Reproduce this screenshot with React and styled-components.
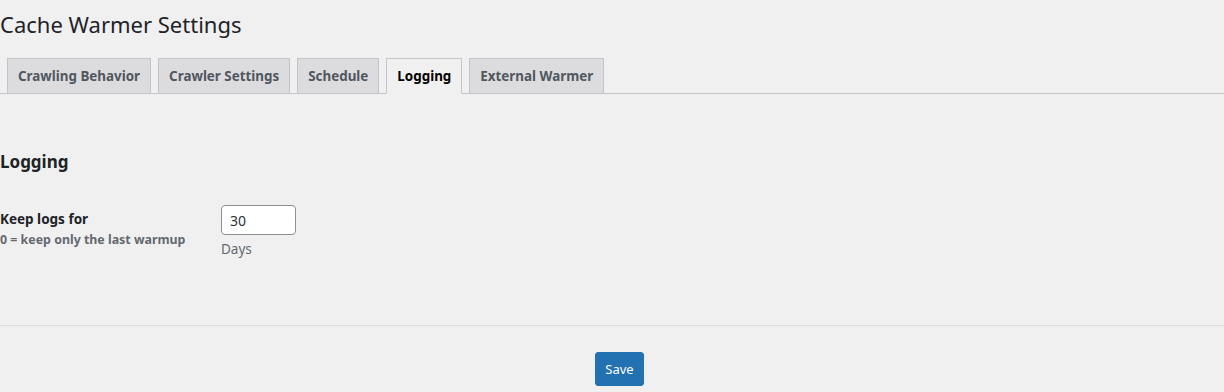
import React, { useState } from 'react';
import styled, { createGlobalStyle } from 'styled-components';

const GlobalStyle = createGlobalStyle`
  html, body {
    margin: 0;
    padding: 0;
    background: #f0f0f1;
  }
  body {
    font-family: "Noto Sans", "Open Sans", sans-serif;
    font-size: 14px;
    color: #3c434a;
  }
`;

const Wrap = styled.div`
  display: flex;
  flex-direction: column;
`;

const Title = styled.h1`
  margin: 0;
  padding: 9px 0 4px;
  font-size: 22px;
  font-weight: 400;
  line-height: 30px;
  color: #1d2327;
`;

const TabBar = styled.nav`
  display: flex;
  margin-top: 15px;
  border-bottom: 1px solid #c3c4c7;
`;

const Tab = styled.a`
  display: block;
  margin-left: 7px;
  margin-bottom: -1px;
  padding: 5px 10px;
  font-size: 13.4px;
  font-weight: 700;
  line-height: 24px;
  text-decoration: none;
  white-space: nowrap;
  border: 1px solid #c3c4c7;
  background: ${p => (p.$active ? '#f0f0f1' : '#dcdcde')};
  border-bottom-color: ${p => (p.$active ? '#f0f0f1' : '#c3c4c7')};
  color: ${p => (p.$active ? '#000' : '#50575e')};
  cursor: pointer;
`;

const Section = styled.section`
  padding-top: 56px;
`;

const SectionTitle = styled.h2`
  margin: 0;
  font-size: 17px;
  font-weight: 700;
  line-height: 24px;
  color: #1d2327;
`;

const FieldRow = styled.div`
  display: grid;
  grid-template-columns: 221px auto;
  margin-top: 16px;
`;

const LabelCell = styled.div`
  padding-top: 20px;
`;

const Label = styled.label`
  display: block;
  font-size: 13.5px;
  font-weight: 700;
  line-height: 18px;
  color: #1d2327;
`;

const Hint = styled.div`
  margin-top: 4px;
  font-size: 12.4px;
  font-weight: 700;
  line-height: 16px;
  color: #646970;
`;

const InputCell = styled.div`
  padding-top: 15px;
  display: flex;
  flex-direction: column;
  align-items: flex-start;
`;

const NumberInput = styled.input`
  box-sizing: border-box;
  width: 75px;
  height: 30px;
  padding: 0 8px;
  font-family: inherit;
  font-size: 14px;
  color: #2c3338;
  background: #fff;
  border: 1px solid #8c8f94;
  border-radius: 4px;
  outline: none;
`;

const Unit = styled.p`
  margin: 5px 0 0;
  font-size: 13.5px;
  line-height: 18px;
  color: #646970;
`;

const Footer = styled.div`
  margin-top: 67px;
  border-top: 1px solid #dcdcde;
  display: flex;
  justify-content: center;
  padding: 26px 0 0 15px;
`;

const SaveButton = styled.button`
  box-sizing: border-box;
  height: 34px;
  padding: 0 9px;
  font-family: inherit;
  font-size: 13px;
  color: #fff;
  background: #2271b1;
  border: 1px solid #2271b1;
  border-radius: 3px;
  cursor: pointer;
`;

const tabs = ['Crawling Behavior', 'Crawler Settings', 'Schedule', 'Logging', 'External Warmer'];

export default function App() {
  const [active, setActive] = useState('Logging');
  const [days, setDays] = useState('30');

  return (
    <Wrap>
      <GlobalStyle />
      <Title>Cache Warmer Settings</Title>
      <TabBar>
        {tabs.map(t => (
          <Tab key={t} $active={t === active} onClick={() => setActive(t)}>
            {t}
          </Tab>
        ))}
      </TabBar>

      <Section>
        <SectionTitle>Logging</SectionTitle>
        <FieldRow>
          <LabelCell>
            <Label htmlFor="keep-logs">Keep logs for</Label>
            <Hint>0 = keep only the last warmup</Hint>
          </LabelCell>
          <InputCell>
            <NumberInput
              id="keep-logs"
              type="text"
              value={days}
              onChange={e => setDays(e.target.value)}
            />
            <Unit>Days</Unit>
          </InputCell>
        </FieldRow>
      </Section>

      <Footer>
        <SaveButton type="button">Save</SaveButton>
      </Footer>
    </Wrap>
  );
}
